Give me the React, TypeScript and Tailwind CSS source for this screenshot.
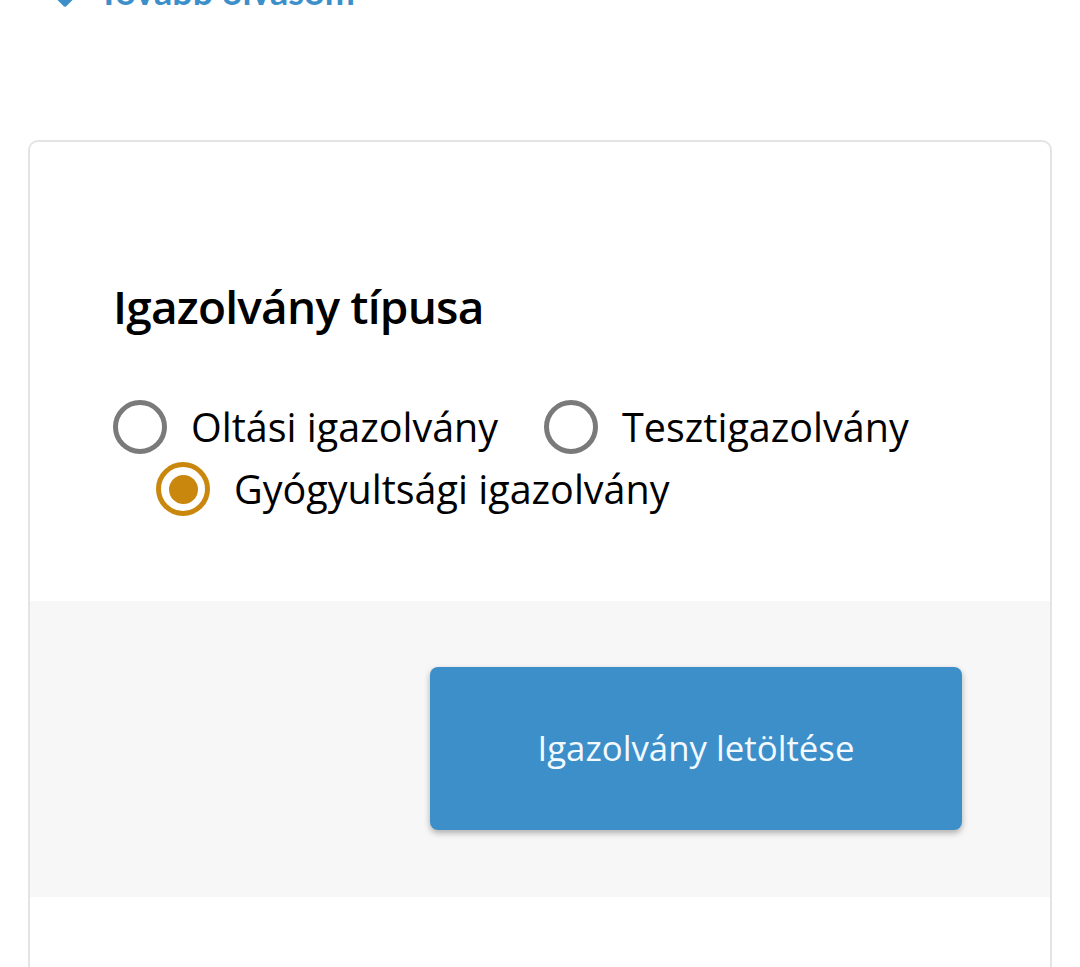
import React, { useState } from 'react';

const options = [
  { id: 'oltasi', label: 'Oltási igazolvány' },
  { id: 'teszt', label: 'Tesztigazolvány' },
  { id: 'gyogyult', label: 'Gyógyultsági igazolvány' },
];

function Radio({ label, checked, onSelect, className = '' }: { label: string; checked: boolean; onSelect: () => void; className?: string }) {
  return (
    <label onClick={onSelect} className={`flex items-center gap-[24px] cursor-pointer h-[62px] ${className}`}>
      <span
        className={`flex h-[54px] w-[54px] shrink-0 items-center justify-center rounded-full border-[5px] ${
          checked ? 'border-[#c9870d]' : 'border-[#7a7a7a]'
        }`}
      >
        {checked && <span className="h-[29px] w-[29px] rounded-full bg-[#c9870d]" />}
      </span>
      <span className="text-[39.5px] leading-[62px] text-black">{label}</span>
    </label>
  );
}

export default function App() {
  const [selected, setSelected] = useState('gyogyult');

  return (
    <div className="min-h-[967px] overflow-hidden bg-white font-['Open_Sans',sans-serif]">
      <div className="mt-[-30px] flex h-[42px] items-end gap-[22px] pl-[54px] text-[#3d8fca] font-['Lato',sans-serif]">
        <svg width="22" height="14" viewBox="0 0 22 14" className="mb-[5px]">
          <path d="M2 2 L11 11 L20 2" fill="none" stroke="currentColor" strokeWidth="5" strokeLinejoin="round" />
        </svg>
        <span className="text-[36px] font-bold leading-[42px]">Tovább olvasom</span>
      </div>

      <div className="mx-[28px] mt-[128px] min-h-[830px] rounded-t-[10px] border-2 border-b-0 border-[#e4e4e4]">
        <div className="px-[83px] pt-[134px] pb-[81px]">
          <h2 className="text-[46px] font-semibold leading-[60px] tracking-[-0.8px] text-black">Igazolvány típusa</h2>
          <div className="mt-[60px] flex flex-col">
            <div className="flex items-center gap-[46px]">
              <Radio label={options[0].label} checked={selected === options[0].id} onSelect={() => setSelected(options[0].id)} />
              <Radio label={options[1].label} checked={selected === options[1].id} onSelect={() => setSelected(options[1].id)} />
            </div>
            <Radio
              className="ml-[43px]"
              label={options[2].label}
              checked={selected === options[2].id}
              onSelect={() => setSelected(options[2].id)}
            />
          </div>
        </div>

        <div className="flex justify-end bg-[#f7f7f7] pt-[66px] pb-[67px] pr-[88px]">
          <button className="h-[163px] w-[532px] rounded-[8px] bg-[#3d8fca] text-[34.8px] text-[#f2f9ff] shadow-[0_3px_6px_rgba(0,0,0,0.3)]">
            Igazolvány letöltése
          </button>
        </div>
      </div>
    </div>
  );
}
